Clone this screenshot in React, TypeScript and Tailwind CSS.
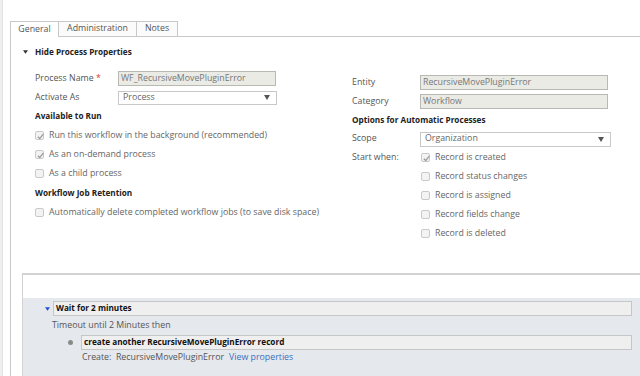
import React from "react";

const font = { fontFamily: '"Open Sans", "Noto Sans", sans-serif' };

function Check({ checked }: { checked?: boolean }) {
  return (
    <span className="relative inline-block w-[9px] h-[9px] rounded-[2px] border border-[#c9c9c9] bg-[#f3f3f3] shrink-0">
      {checked && (
        <svg viewBox="0 0 10 10" className="absolute left-0 top-0 w-[9px] h-[9px]">
          <path d="M2 5.2 L4.2 7.3 L8 2.3" fill="none" stroke="#9a9a9a" strokeWidth="1.4" />
        </svg>
      )}
    </span>
  );
}

function CbRow({ label, checked }: { label: string; checked?: boolean }) {
  return (
    <div className="flex items-center h-[19px]">
      <Check checked={checked} />
      <span className="ml-[5px] text-[8.8px] text-[#666]">{label}</span>
    </div>
  );
}

function Heading({ children }: { children: React.ReactNode }) {
  return <div className="h-[19px] flex items-center text-[8.2px] font-bold text-[#222]">{children}</div>;
}

function Arrow() {
  return (
    <svg viewBox="0 0 6 5" className="w-[6px] h-[5px]">
      <path d="M0 0 H6 L3 5 Z" fill="#555" />
    </svg>
  );
}

export default function App() {
  return (
    <div className="w-[640px] h-[376px] bg-white flex overflow-hidden" style={font}>
      <div className="w-[3px] bg-[#efefef] border-r border-[#e2e2e2]" />
      <div className="w-[7px]" />
      <div className="flex-1 flex flex-col pt-[21px]">
        {/* tabs */}
        <div className="flex h-[16px] items-stretch">
          <div className="w-[49px] border border-b-0 border-[#c8c8c8] bg-white flex items-center justify-center text-[8.8px] text-[#555]">
            General
          </div>
          <div className="w-[78px] border-t border-r border-b border-[#c8c8c8] bg-[#fbfbfb] flex items-center justify-center text-[8.8px] text-[#555]">
            Administration
          </div>
          <div className="w-[41px] border-t border-r border-b border-[#c8c8c8] bg-[#fbfbfb] flex items-center justify-center text-[8.8px] text-[#555]">
            Notes
          </div>
          <div className="flex-1 border-b border-[#c8c8c8]" />
        </div>
        {/* panel */}
        <div className="flex-1 border-l border-[#c8c8c8] flex flex-col">
          <div className="h-[29px] flex items-center pl-[12px] pt-[1px]">
            <svg viewBox="0 0 6 4" className="w-[5px] h-[4px] mr-[7px]">
              <path d="M0 0 H6 L3 4 Z" fill="#333" />
            </svg>
            <span className="text-[8.2px] font-bold text-[#222]">Hide Process Properties</span>
          </div>
          <div className="flex">
            {/* left column */}
            <div className="w-[341px] pl-[24px] pt-[3px]">
              <div className="h-[19px] flex items-center">
                <span className="w-[83px] text-[8.8px] text-[#555]">
                  Process Name <span className="text-[#e0392b]">*</span>
                </span>
                <div className="w-[158px] h-[15px] border border-[#b9b9b4] bg-[#ebebe6] flex items-center px-[2px] text-[8.8px] text-[#777]">
                  WF_RecursiveMovePluginError
                </div>
              </div>
              <div className="h-[19px] flex items-center">
                <span className="w-[83px] text-[8.8px] text-[#555]">Activate As</span>
                <div className="w-[159px] h-[14px] border border-[#c8c8c8] bg-white flex items-center justify-between pl-[4px] pr-[6px] text-[8.8px] text-[#666]">
                  Process
                  <Arrow />
                </div>
              </div>
              <Heading>Available to Run</Heading>
              <CbRow label="Run this workflow in the background (recommended)" checked />
              <CbRow label="As an on-demand process" checked />
              <CbRow label="As a child process" />
              <div className="h-[1px]" />
              <Heading>Workflow Job Retention</Heading>
              <CbRow label="Automatically delete completed workflow jobs (to save disk space)" />
            </div>
            {/* right column */}
            <div className="flex-1 pt-[7px]">
              <div className="h-[19px] flex items-center">
                <span className="w-[68px] text-[8.8px] text-[#555]">Entity</span>
                <div className="w-[188px] h-[15px] border border-[#b9b9b4] bg-[#ebebe6] flex items-center px-[2px] text-[8.8px] text-[#777]">
                  RecursiveMovePluginError
                </div>
              </div>
              <div className="h-[19px] flex items-center">
                <span className="w-[68px] text-[8.8px] text-[#555]">Category</span>
                <div className="w-[188px] h-[15px] border border-[#b9b9b4] bg-[#ebebe6] flex items-center px-[2px] text-[8.8px] text-[#777]">
                  Workflow
                </div>
              </div>
              <Heading>Options for Automatic Processes</Heading>
              <div className="h-[18px] flex items-center">
                <span className="w-[68px] text-[8.8px] text-[#555]">Scope</span>
                <div className="w-[191px] h-[15px] border border-[#c8c8c8] bg-white flex items-center justify-between pl-[4px] pr-[6px] text-[8.8px] text-[#666]">
                  Organization
                  <Arrow />
                </div>
              </div>
              <div className="flex">
                <span className="w-[69px] h-[19px] flex items-center text-[8.8px] text-[#555]">Start when:</span>
                <div className="flex flex-col">
                  <CbRow label="Record is created" checked />
                  <CbRow label="Record status changes" />
                  <CbRow label="Record is assigned" />
                  <CbRow label="Record fields change" />
                  <CbRow label="Record is deleted" />
                </div>
              </div>
            </div>
          </div>
          {/* bottom designer */}
          <div className="mt-[30px] ml-[11px] flex-1 border-l border-t-2 border-[#d2d2d2] flex flex-col">
            <div className="h-[23px] bg-white" />
            <div className="flex-1 bg-[#e5e8ed] pt-[3px] pr-[8px]">
              <div className="flex items-center h-[15px]">
                <div className="w-[30px] flex justify-end pr-[3px]">
                  <svg viewBox="0 0 6 4" className="w-[5px] h-[4px]">
                    <path d="M0 0 H6 L3 4 Z" fill="#1f4fd6" />
                  </svg>
                </div>
                <div className="flex-1 h-[15px] border border-[#c6c6c6] bg-[#efefef] flex items-center pl-[2px] text-[8.2px] font-bold text-[#111]">
                  Wait for 2 minutes
                </div>
              </div>
              <div className="h-[19px] flex items-center pl-[29px] text-[8.8px] text-[#555]">
                Timeout until 2 Minutes then
              </div>
              <div className="flex items-center h-[15px]">
                <div className="w-[58px] flex justify-end pr-[8px]">
                  <span className="w-[5px] h-[5px] rounded-full bg-[#8a8a8a]" />
                </div>
                <div className="flex-1 h-[15px] border border-[#c6c6c6] bg-[#efefef] flex items-center pl-[2px] text-[8.2px] font-bold text-[#111]">
                  create another RecursiveMovePluginError record
                </div>
              </div>
              <div className="h-[16px] flex items-center pl-[59px] text-[8.8px] text-[#555]">
                <span>Create:&nbsp; RecursiveMovePluginError</span>
                <span className="ml-[5px] text-[#3c6fc0]">View properties</span>
              </div>
            </div>
          </div>
        </div>
      </div>
    </div>
  );
}
